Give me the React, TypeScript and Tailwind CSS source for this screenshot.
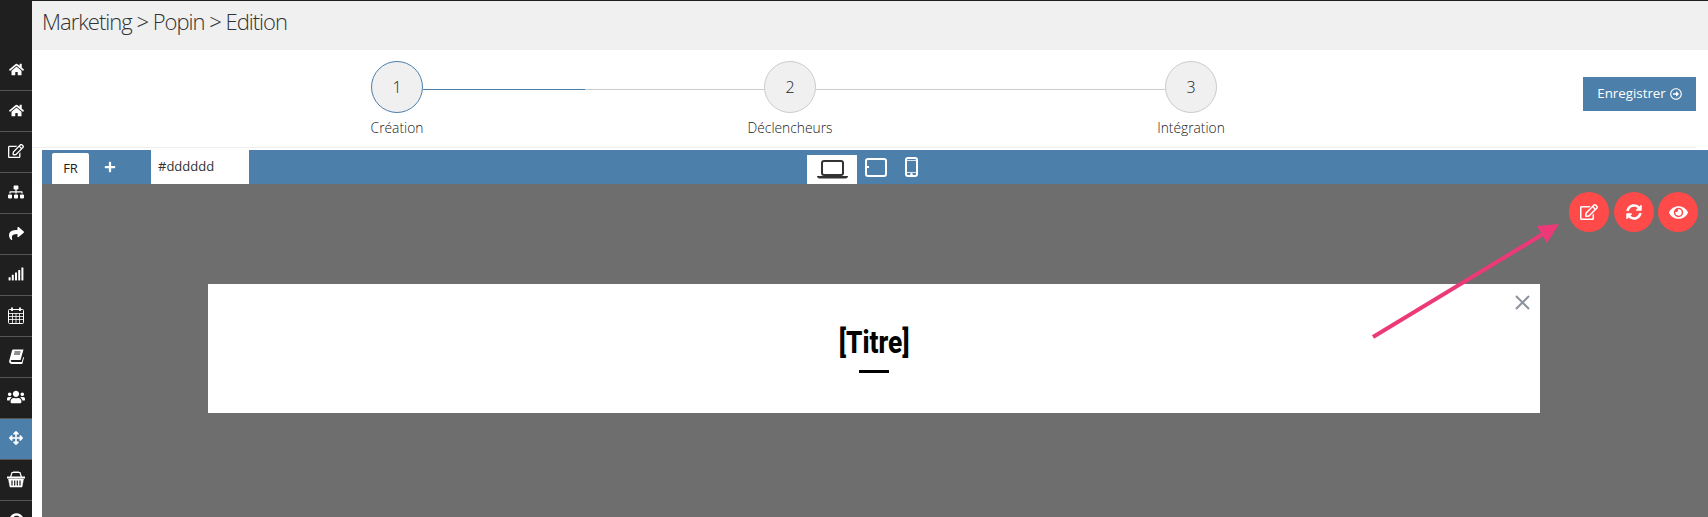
import {
  FaArrowsAlt,
  FaEye,
  FaHome,
  FaPlus,
  FaRegArrowAltCircleRight,
  FaRegEdit,
  FaShare,
  FaSignal,
  FaSitemap,
  FaSyncAlt,
  FaUsers,
  FaQuestionCircle,
} from "react-icons/fa";

function CalendarIcon() {
  return (
    <svg width="16" height="17" viewBox="0 0 16 17" fill="none" stroke="#fff">
      <rect x="0.500" y="2.500" width="15" height="14" rx="1" strokeWidth="1" />
      <path d="M0.500 6.500h15M0.500 9.500h15M0.500 12.500h15M4.500 6v10M8 6v10M11.500 6v10" strokeWidth="0.800" />
      <path d="M4 0.500v3.500M12 0.500v3.500" strokeWidth="1.800" />
    </svg>
  );
}

function BookIcon() {
  return (
    <svg width="15" height="15" viewBox="0 0 15 15" fill="#fff">
      <path d="M4 0.500h10.500l-3 10.500H2.800C2 11 1.600 11.600 1.800 12.300c.2.500.6.700 1.200.7h9.800l1.400-5 .8.500-1.700 6.500H3c-1.600 0-2.800-1-2.900-2.700L3 1.500C3.200.9 3.500.5 4 .5z" />
      <path d="M5.500 3h6M5 5h6" stroke="#1f1f1f" strokeWidth="1" />
    </svg>
  );
}

function BasketIcon() {
  return (
    <svg width="18" height="17" viewBox="0 0 18 17" fill="none" stroke="#fff">
      <path d="M3.500 6.500 5 1.500h8l1.500 5" strokeWidth="1.200" />
      <rect x="6" y="0.500" width="6" height="1.500" fill="#fff" strokeWidth="0" />
      <path d="M0 6.500h18" strokeWidth="2" />
      <path d="M1.500 8 3 16h12l1.500-8z" fill="#fff" strokeWidth="0.500" />
      <path d="M5 9.500v5M7.700 9.500v5M10.300 9.500v5M13 9.500v5" stroke="#1f1f1f" strokeWidth="1.200" />
    </svg>
  );
}

const menu = [
  { id: 1, icon: <FaHome size={15} /> },
  { id: 2, icon: <FaHome size={15} /> },
  { id: 3, icon: <FaRegEdit size={16} /> },
  { id: 4, icon: <FaSitemap size={16} /> },
  { id: 5, icon: <FaShare size={15} /> },
  { id: 6, icon: <FaSignal size={16} /> },
  { id: 7, icon: <CalendarIcon /> },
  { id: 8, icon: <BookIcon /> },
  { id: 9, icon: <FaUsers size={18} /> },
  { id: 10, icon: <FaArrowsAlt size={14} />, active: true },
  { id: 11, icon: <BasketIcon /> },
  { id: 12, icon: <FaQuestionCircle size={15} /> },
];

function Sidebar() {
  return (
    <div className="w-8 shrink-0 bg-[#1f1f1f] pt-[49px] flex flex-col">
      {menu.map((item) => (
        <div
          key={item.id}
          className={`h-[41px] shrink-0 pb-[2px] flex items-center justify-center border-b border-[#555] text-white ${
            item.active ? "bg-[#4d7fab]" : ""
          }`}
        >
          {item.icon}
        </div>
      ))}
    </div>
  );
}

function Step({ n, label, active }: { n: number; label: string; active?: boolean }) {
  return (
    <div className="w-[52px] shrink-0 flex flex-col items-center">
      <div
        className={`w-[52px] h-[52px] shrink-0 rounded-full bg-[#f0f0f0] border flex items-center justify-center text-[16px] font-light text-[#222] ${
          active ? "border-[#4d7fab]" : "border-[#ccc]"
        }`}
      >
        {n}
      </div>
      <span className="mt-[5px] text-[13.8px] leading-5 font-light text-[#222] whitespace-nowrap">{label}</span>
    </div>
  );
}

function Stepper() {
  return (
    <div className="h-[98px] flex items-start pt-[11px] pl-[339px] border-b border-[#eee] mr-[12px]">
      <Step n={1} label="Création" active />
      <div className="w-[341px] h-px bg-[#ccc] mt-[28px]">
        <div className="w-[162px] h-px bg-[#4d7fab]" />
      </div>
      <Step n={2} label="Déclencheurs" />
      <div className="w-[349px] h-px bg-[#ccc] mt-[28px]" />
      <Step n={3} label="Intégration" />
      <button
        type="button"
        className="ml-auto mt-[16px] w-[113px] h-[34px] bg-[#4d7fab] text-white text-[13.3px] flex items-center justify-center gap-1"
      >
        Enregistrer <FaRegArrowAltCircleRight size={12} />
      </button>
    </div>
  );
}

function Toolbar() {
  return (
    <div className="h-[34px] shrink-0 mt-[2px] ml-[10px] bg-[#4d7fab] flex items-end">
      <div className="ml-[10px] w-[37px] h-[31px] bg-white flex items-center justify-center text-[13px] text-[#222] rounded-t-[2px]">
        FR
      </div>
      <div className="w-[62px] h-[34px] flex items-center justify-center text-white pr-[20px]">
        <FaPlus size={12} />
      </div>
      <div className="w-[98px] h-[34px] bg-white flex items-center pl-[7px] text-[13px] text-[#333]">#dddddd</div>
      <div className="ml-[558px] w-[50px] h-[29px] bg-white flex items-center justify-center">
        <svg width="31" height="19" viewBox="0 0 31 19" fill="none">
          <rect x="5" y="1" width="21" height="14" rx="2" stroke="#333" strokeWidth="2" />
          <path d="M0 16h31c0 1.500-1 2.500-2.500 2.500h-26C1 18.500 0 17.500 0 16z" fill="#333" />
        </svg>
      </div>
      <div className="h-[34px] flex items-center pl-[8px] gap-[18px]">
        <svg width="22" height="19" viewBox="0 0 22 19" fill="none">
          <rect x="1" y="1" width="20" height="17" rx="2" stroke="#fff" strokeWidth="2" />
          <rect x="2" y="8" width="2" height="2" fill="#fff" />
        </svg>
        <svg width="13" height="20" viewBox="0 0 13 20" fill="none">
          <rect x="1" y="1" width="11" height="18" rx="2" stroke="#fff" strokeWidth="2" />
          <rect x="1" y="3.500" width="11" height="12" stroke="#fff" strokeWidth="0.800" />
          <circle cx="6.500" cy="17.300" r="1.200" fill="#fff" />
        </svg>
      </div>
    </div>
  );
}

function RoundButton({ children }: { children: React.ReactNode }) {
  return (
    <div className="w-10 h-10 rounded-full bg-[#ff4a4a] text-white flex items-center justify-center">{children}</div>
  );
}

function Canvas() {
  return (
    <div className="ml-[10px] flex-1 bg-[#6e6e6e] pt-2 pr-[10px] overflow-hidden">
      <div className="flex justify-end gap-[4.500px]">
        <RoundButton>
          <FaRegEdit size={18} />
        </RoundButton>
        <RoundButton>
          <FaSyncAlt size={16} />
        </RoundButton>
        <RoundButton>
          <FaEye size={19} />
        </RoundButton>
      </div>
      <div className="relative mt-[52px] ml-[166px] w-[1332px] h-[129px] bg-white flex flex-col items-center pt-[39px]">
        <svg className="absolute right-[10px] top-[11px]" width="15" height="15" viewBox="0 0 15 15" stroke="#8c939b" strokeWidth="2">
          <path d="M1 1l13 13M14 1L1 14" />
        </svg>
        <h1 className="font-['Roboto'] font-extrabold text-[32px] leading-[38px] text-black scale-x-[0.82]">[Titre]</h1>
        <div className="w-[30px] h-[3px] bg-black mt-[9px]" />
      </div>
    </div>
  );
}

export default function App() {
  return (
    <div className="h-[517px] overflow-hidden flex border-t border-[#1f1f1f] bg-white font-['Open_Sans',sans-serif] relative">
      <Sidebar />
      <div className="flex-1 flex flex-col min-w-0">
        <div className="h-[49px] shrink-0 bg-[#f0f0f0] pl-[10px] flex items-start pt-[4px] text-[22px] leading-[32px] font-light tracking-[-1px] text-[#333]">
          Marketing &gt; Popin &gt; Edition
        </div>
        <Stepper />
        <Toolbar />
        <Canvas />
      </div>
      {/* annotation arrow */}
      <svg className="absolute left-0 top-[-1px] pointer-events-none" width="1708" height="517">
        <line x1="1373" y1="337" x2="1548" y2="231" stroke="#ec3a78" strokeWidth="4" />
        <polygon points="1559,224 1537,226 1547,243" fill="#ec3a78" />
      </svg>
    </div>
  );
}
